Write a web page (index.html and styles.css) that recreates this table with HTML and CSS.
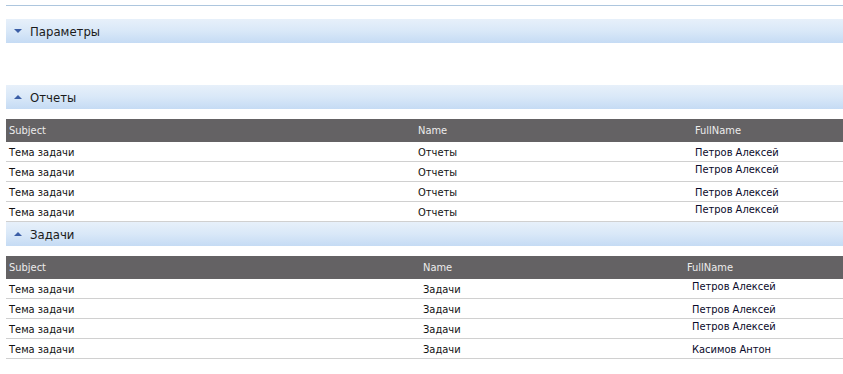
FILE: index.html
```html
<!DOCTYPE html>
<html>
<head>
<meta charset="utf-8">
<link rel="stylesheet" href="styles.css">
</head>
<body>
<div class="page">
  <div class="rule"></div>
  <div class="section-bar bar-params">
    <span class="tri tri-down"></span><span class="bar-title">Параметры</span>
  </div>
  <div class="section-bar bar-reports">
    <span class="tri tri-up"></span><span class="bar-title">Отчеты</span>
  </div>
  <div class="grid grid-reports">
    <div class="row head"><div class="cell">Subject</div><div class="cell">Name</div><div class="cell">FullName</div></div>
    <div class="row"><div class="cell">Тема задачи</div><div class="cell">Отчеты</div><div class="cell fn">Петров Алексей</div></div>
    <div class="row"><div class="cell">Тема задачи</div><div class="cell">Отчеты</div><div class="cell fn up">Петров Алексей</div></div>
    <div class="row"><div class="cell">Тема задачи</div><div class="cell">Отчеты</div><div class="cell fn">Петров Алексей</div></div>
    <div class="row"><div class="cell">Тема задачи</div><div class="cell">Отчеты</div><div class="cell fn up">Петров Алексей</div></div>
  </div>
  <div class="section-bar bar-tasks">
    <span class="tri tri-up"></span><span class="bar-title">Задачи</span>
  </div>
  <div class="grid grid-tasks">
    <div class="row head"><div class="cell">Subject</div><div class="cell">Name</div><div class="cell">FullName</div></div>
    <div class="row"><div class="cell">Тема задачи</div><div class="cell">Задачи</div><div class="cell fn up">Петров Алексей</div></div>
    <div class="row"><div class="cell">Тема задачи</div><div class="cell">Задачи</div><div class="cell fn">Петров Алексей</div></div>
    <div class="row"><div class="cell">Тема задачи</div><div class="cell">Задачи</div><div class="cell fn up">Петров Алексей</div></div>
    <div class="row"><div class="cell">Тема задачи</div><div class="cell">Задачи</div><div class="cell fn">Касимов Антон</div></div>
  </div>
</div>
</body>
</html>
```
FILE: styles.css
```css
html, body {
  margin: 0;
  padding: 0;
  background: #ffffff;
}
.page {
  padding: 5px 0 0 6px;
  font-family: "DejaVu Sans Condensed", "DejaVu Sans", sans-serif;
  font-size: 11px;
  color: #000;
}
.rule {
  height: 1px;
  background: #adc6de;
  margin-bottom: 13px;
}
.section-bar {
  height: 24px;
  display: flex;
  align-items: center;
  background: linear-gradient(to bottom, #e7f0fa 0%, #d9e8f8 50%, #c5dbf4 100%);
}
.bar-params { margin-bottom: 42px; }
.bar-reports { margin-bottom: 10px; }
.bar-tasks { margin-bottom: 10px; }
.tri {
  width: 0;
  height: 0;
  margin-left: 8px;
  margin-right: 8px;
  border-left: 4px solid transparent;
  border-right: 4px solid transparent;
}
.tri-down { border-top: 4px solid #3b5ea6; }
.tri-up { border-bottom: 4px solid #3b5ea6; }
.bar-title {
  font-size: 13px;
  color: #1b1b1b;
}
.grid {
  display: flex;
  flex-direction: column;
}
.row {
  display: grid;
  box-sizing: border-box;
  height: 20px;
  border-bottom: 1px solid #d0d0d0;
  color: #111;
}
.grid-reports .row { grid-template-columns: 409px 277px 1fr; }
.grid-tasks .row { grid-template-columns: 414px 264px 1fr; }
.row.head {
  height: 23px;
  border-bottom: none;
  background: #646264;
  color: #ececec;
}
.cell {
  padding: 0 3px;
  white-space: nowrap;
  display: flex;
  align-items: center;
}
.row:not(.head) .cell { padding-top: 1px; }
.cell.fn { color: #0a0a2a; }
.cell.up { align-items: flex-start; padding-top: 2px; }
.grid-tasks .cell.fn { padding-left: 8px; }
```
